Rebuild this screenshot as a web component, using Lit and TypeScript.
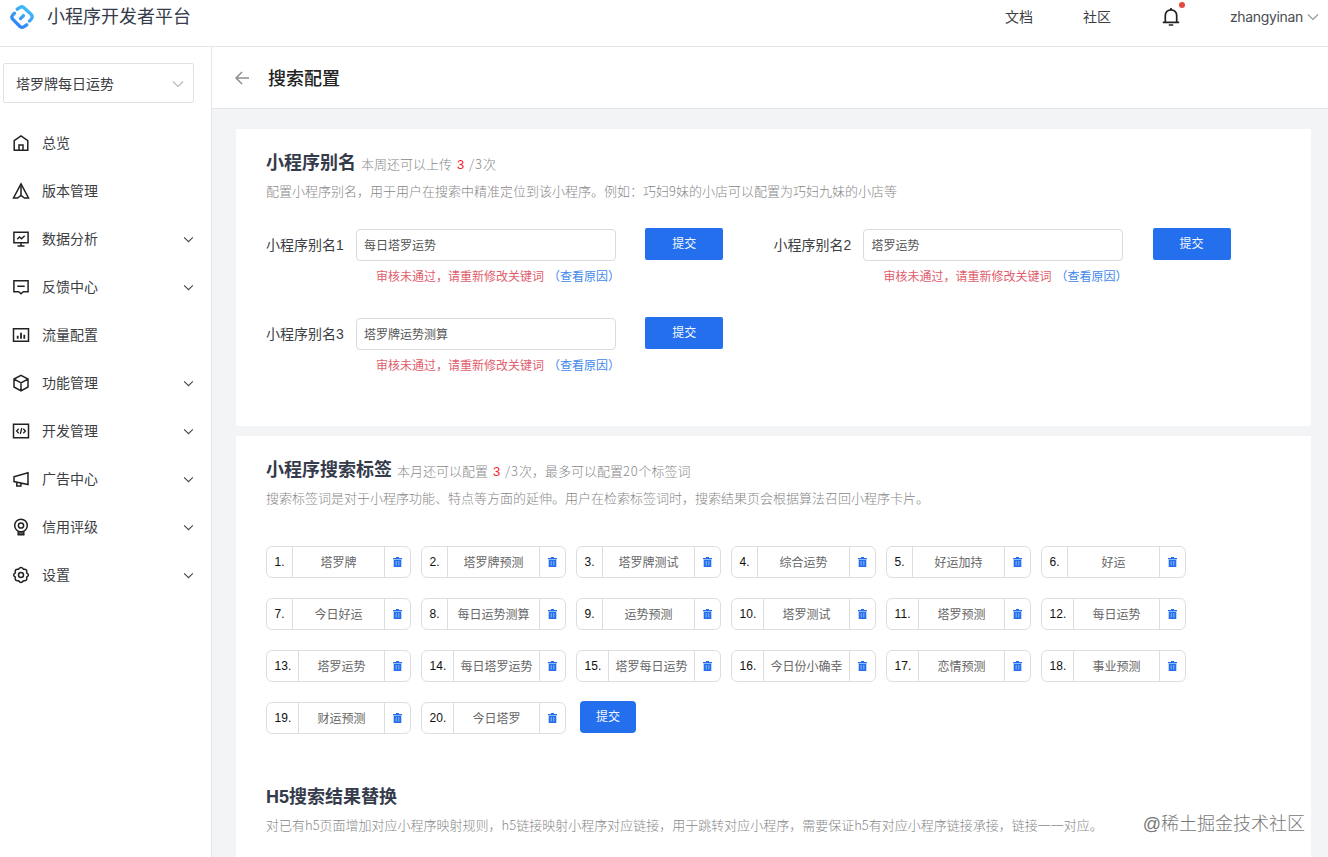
import { LitElement, html, css, svg } from "lit";
import { customElement } from "lit/decorators.js";

const icons: Record<string, unknown> = {
  home: svg`<path d="M2.2 6.6 9 1.8l6.800 4.800V16.200H2.200Z"/><path d="M7 16v-5h4v5"/>`,
  version: svg`<path d="M9 1.900 16.500 16H12.500L9 13.500 5.500 16H1.500Z"/><path d="M9 2v11.500"/>`,
  data: svg`<path d="M1.900 2.300h14.200v10.400H1.900ZM9 12.700v3M5.500 16.100h7"/><path d="m5.200 9.300 2.300-2.300 2 1.700 3.200-3"/>`,
  feedback: svg`<path d="M1.900 2.700h14.200v11H11.300L9 15.800 6.700 13.700H1.900ZM5.300 8.200h7.400"/>`,
  flow: svg`<path d="M1.500 2.800h15v12.400h-15Z"/><path stroke-width="1.800" d="M5.700 9.800v3M9 6.800v6M12.300 8.800v4"/>`,
  cube: svg`<path d="M9 1.300 16 5v8L9 16.800 2 13V5ZM2.200 5.100 9 8.800l6.800-3.700M9 8.800v7.900"/>`,
  code: svg`<path d="M1.500 2.200h15v13.600h-15Z"/><path stroke-width="1.300" d="M6.700 6.700 4.600 9l2.100 2.300M11.300 6.700 13.400 9l-2.100 2.300M9.800 6l-1.500 6"/>`,
  ad: svg`<path d="M2 6.800 16 2.700v11.800L2 11.600ZM4.800 12.300v3.600h4.100v-2.800"/>`,
  medal: svg`<circle cx="9" cy="7.500" r="6.300"/><circle cx="9" cy="7.500" r="2.600"/><path d="M6.200 13.300v3.500h5.600v-3.500M6.200 15h5.600"/>`,
  gear: svg`<path stroke-linejoin="round" d="M6.500 3.300Q9-.3 11.500 3.300 15.800 2.900 14.600 6.800 18.200 9 14.600 11.200 15.800 15.100 11.500 14.700 9 18.300 6.500 14.700 2.200 15.100 3.400 11.200-.2 9 3.400 6.800 2.200 2.900 6.500 3.300Z"/><circle cx="9" cy="9" r="2.500"/>`,
};

const menu: [string, string, boolean][] = [
  ["home", "总览", false],
  ["version", "版本管理", false],
  ["data", "数据分析", true],
  ["feedback", "反馈中心", true],
  ["flow", "流量配置", false],
  ["cube", "功能管理", true],
  ["code", "开发管理", true],
  ["ad", "广告中心", true],
  ["medal", "信用评级", true],
  ["gear", "设置", true],
];

const aliases = ["每日塔罗运势", "塔罗运势", "塔罗牌运势测算"];

const tags = [
  "塔罗牌", "塔罗牌预测", "塔罗牌测试", "综合运势", "好运加持", "好运",
  "今日好运", "每日运势测算", "运势预测", "塔罗测试", "塔罗预测", "每日运势",
  "塔罗运势", "每日塔罗运势", "塔罗每日运势", "今日份小确幸", "恋情预测", "事业预测",
  "财运预测", "今日塔罗",
];

const chevron = html`<svg class="chev" width="12" height="8" viewBox="0 0 12 8"><path d="m1 1.500 5 5 5-5"/></svg>`;

@customElement("app-root")
export class AppRoot extends LitElement {
  static styles = css`
    :host {
      display: block;
      height: 857px;
      overflow: hidden;
      position: relative;
      background: #fff;
      color: #3c3e42;
      font: 14px/20px "Liberation Sans", "Noto Sans CJK SC", sans-serif;
    }
    * { box-sizing: border-box; }
    svg { display: block; fill: none; stroke: currentColor; flex: none; }
    .top {
      height: 47px;
      border-bottom: 1px solid #e4e6e9;
      display: flex;
      align-items: flex-start;
      padding: 0 9px 0 9px;
    }
    .logo { margin-top: 4px; }
    .brand { font-size: 18px; line-height: 34px; margin-left: 12px; color: #353b4b; flex: 1; }
    .link { line-height: 34px; margin-right: 50px; }
    .bell { position: relative; margin: 7px 50px 0 1px; color: #222; }
    .dot { position: absolute; right: -5px; top: -5px; width: 6px; height: 6px; border-radius: 50%; background: #e5483e; }
    .user { font-family: Inter, sans-serif; line-height: 34px; color: #4a4d52; letter-spacing: -0.33px; }
    .top .chev { margin: 13px 0 0 4px; color: #999; }
    .body { display: flex; height: 810px; }
    .side { width: 212px; border-right: 1px solid #e4e6e9; padding-top: 16px; }
    .select {
      margin: 0 0 16px 3px; width: 191px; height: 40px; border: 1px solid #dfe1e4; border-radius: 2px;
      display: flex; align-items: center; justify-content: space-between; padding: 1px 9px 0 12px;
    }
    .select .chev { color: #b5b8bd; }
    .item { height: 48px; display: flex; align-items: center; padding: 0 17px 0 12px; color: #222; }
    .item svg { stroke-width: 1.500; }
    .item span { flex: 1; margin-left: 12px; color: #3c3e42; }
    .item .chev { width: 11px; height: 7px; margin-top: 1px; color: #444; }
    .chev { stroke-width: 1.200 !important; }
    .main { flex: 1; background: #f2f4f6; }
    .head { height: 62px; background: #fff; border-bottom: 1px solid #e2e5e8; display: flex; align-items: center; padding-left: 23px; color: #8b8e93; }
    .head h1 { margin: 2px 0 0 19px; font-size: 18px; line-height: 26px; font-weight: 500; color: #222; }
    .card { background: #fff; margin-left: 24px; width: 1075px; padding: 21px 30px 0; }
    .first { margin-top: 20px; height: 297px; }
    .second { margin-top: 10px; height: 440px; }
    .title { display: flex; align-items: baseline; height: 28px; line-height: 26px; }
    h2 { margin: 0 5px 0 0; font-size: 18px; font-weight: 700; color: #353b4b; }
    .note, .desc { font-family: "Noto Sans CJK SC", sans-serif; font-size: 13px; font-weight: 300; color: #888; }
    .note { word-spacing: 1px; }
    .note b { font-family: "Liberation Sans", sans-serif; font-weight: 400; color: #f5222d; padding: 0 1px; }
    .note i { font-style: normal; letter-spacing: .9px; }
    .desc { line-height: 20px; height: 20px; margin-top: 3px; white-space: nowrap; }
    .forms { display: grid; grid-template-columns: 507.400px 507.400px; grid-auto-rows: 89px; margin-top: 27px; }
    .alias { display: grid; grid-template-columns: 90px 260px 78px; grid-template-rows: 33px 32px; align-items: end; }
    .label { line-height: 32px; }
    .input { height: 32px; border: 1px solid #d9dbde; border-radius: 4px; font-size: 12px; line-height: 32px; padding-left: 7px; color: #555; }
    .btn { background: #236fee; color: #f4f8ff; font-size: 12px; line-height: 33px; height: 32px; text-align: center; border-radius: 2px; }
    .alias .btn { width: 78px; margin-left: 29.200px; align-self: start; }
    .err { grid-column: 2; font-size: 12px; line-height: 32px; height: 32px; color: #df5d6c; padding-left: 20px; white-space: nowrap; }
    .err a { color: #4388ea; margin-left: 4px; }
    .tags { display: flex; flex-wrap: wrap; gap: 20px 10px; margin: 38px 0 0; }
    .tag { width: 145px; height: 32px; border: 1px solid #dcdee1; border-radius: 6px; display: flex; font-size: 12px; line-height: 31px; }
    .num { padding: 0 0 0 7.500px; width: 25px; color: #111; white-space: nowrap; letter-spacing: .1px; line-height: 30px; }
    .wide { width: 31px; }
    .word { flex: 1; border: solid #dcdee1; border-width: 0 1px; text-align: center; color: #666; white-space: nowrap; line-height: 32px; height: 30px; }
    .del { width: 25px; display: flex; align-items: center; justify-content: center; color: #236fee; }
    .tags .btn { width: 56px; margin: -1px 0 0 4px; border-radius: 4px; }
    .h5 { margin-top: 50px; }
    .mark { position: absolute; right: 23px; bottom: 20px; font-size: 18px; line-height: 26px; font-weight: 300; color: #777; text-shadow: -1px -1px 0 #fff; }
  `;

  render() {
    return html`
      <header class="top">
        <svg class="logo" width="26" height="26" viewBox="0 0 26 26" stroke-width="3.300" stroke-linecap="round" stroke-linejoin="round">
          <defs>
            <linearGradient id="blue" gradientUnits="userSpaceOnUse" x1="20" y1="2" x2="6" y2="24">
              <stop offset="0" stop-color="#45c3f8"/><stop offset="1" stop-color="#2b7cf6"/>
            </linearGradient>
          </defs>
          <g stroke="url(#blue)">
            <path d="M8.300 5.200 11 3.300Q13 2 15 3.700L22.500 10.800Q24 13 22.300 15L20.500 17"/>
            <path d="M5.500 9.200 3.700 11.200Q2 13.200 3.700 15.200L11 22.500Q13 24 15 22.700L17.700 20.800"/>
            <path d="M11.500 14.600 14.500 11.600"/>
          </g>
        </svg>
        <div class="brand">小程序开发者平台</div>
        <div class="link">文档</div>
        <div class="link">社区</div>
        <div class="bell">
          <svg width="18" height="20" viewBox="0 0 18 20" stroke-width="1.700"><path d="M3.300 15V8.500a5.700 5.700 0 0 1 11.400 0V15M.8 15.300h16.400M9 1v2M6.800 18h4.400"/></svg>
          <i class="dot"></i>
        </div>
        <div class="user">zhangyinan</div>
        ${chevron}
      </header>
      <div class="body">
        <nav class="side">
          <div class="select">塔罗牌每日运势${chevron}</div>
          ${menu.map(([icon, name, more]) => html`
            <div class="item">
              <svg width="18" height="18" viewBox="0 0 18 18">${icons[icon]}</svg>
              <span>${name}</span>${more ? chevron : ""}
            </div>`)}
        </nav>
        <main class="main">
          <div class="head">
            <svg width="14" height="14" viewBox="0 0 14 14" stroke-width="1.500"><path d="M7 1 1 7l6 6M1 7h13"/></svg>
            <h1>搜索配置</h1>
          </div>
          <section class="card first">
            <div class="title"><h2>小程序别名</h2><span class="note">本周还可以上传 <b>3</b> <i>/3</i>次</span></div>
            <div class="desc">配置小程序别名，用于用户在搜索中精准定位到该小程序。例如：巧妇9妹的小店可以配置为巧妇九妹的小店等</div>
            <div class="forms">
              ${aliases.map((value, i) => html`
                <div class="alias">
                  <div class="label">小程序别名${i + 1}</div>
                  <div class="input">${value}</div>
                  <div class="btn">提交</div>
                  <div class="err">审核未通过，请重新修改关键词<a>（查看原因）</a></div>
                </div>`)}
            </div>
          </section>
          <section class="card second">
            <div class="title"><h2>小程序搜索标签</h2><span class="note">本月还可以配置 <b>3</b> <i>/3</i>次，最多可以配置<i>20</i>个标签词</span></div>
            <div class="desc">搜索标签词是对于小程序功能、特点等方面的延伸。用户在检索标签词时，搜索结果页会根据算法召回小程序卡片。</div>
            <div class="tags">
              ${tags.map((word, i) => html`
                <div class="tag">
                  <div class="num ${i > 8 ? "wide" : ""}">${i + 1}.</div>
                  <div class="word">${word}</div>
                  <div class="del">
                    <svg width="9" height="10" viewBox="0 0 9 10"><path fill="currentColor" stroke="none" d="M3 0h3v1h3v1.300H0V1h3ZM.7 2.800h7.600V10H.7Z"/><path stroke="#a9c8fa" stroke-width=".8" d="M3.200 4v4.500M5.800 4v4.500"/></svg>
                  </div>
                </div>`)}
              <div class="btn">提交</div>
            </div>
            <div class="title h5"><h2>H5搜索结果替换</h2></div>
            <div class="desc">对已有h5页面增加对应小程序映射规则，h5链接映射小程序对应链接，用于跳转对应小程序，需要保证h5有对应小程序链接承接，链接一一对应。</div>
          </section>
        </main>
      </div>
      <div class="mark">@稀土掘金技术社区</div>
    `;
  }
}
